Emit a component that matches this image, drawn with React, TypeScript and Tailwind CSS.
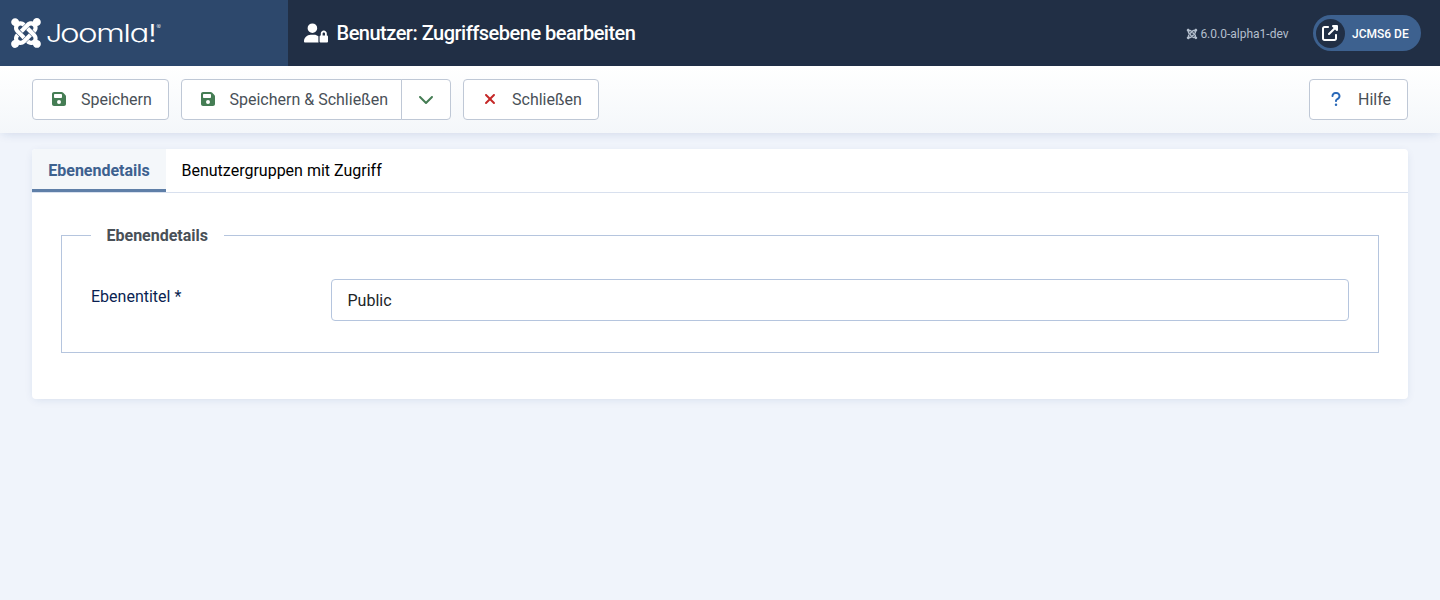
import React from "react";
import {
  FaJoomla,
  FaUserLock,
  FaUpRightFromSquare,
  FaFloppyDisk,
  FaChevronDown,
  FaXmark,
  FaQuestion,
} from "react-icons/fa6";

const button =
  "flex h-[41px] items-center border border-[#bfc8d6] bg-white text-[16px] leading-6 text-[#495057]";

function Logo() {
  return (
    <div className="flex h-[66px] w-[288px] shrink-0 items-center bg-[#2d486c] pl-[11px] text-white">
      <FaJoomla className="h-[34px] w-[30px] shrink-0" />
      <svg
        className="ml-[5px] h-[34px] w-[118px] font-['Inter',sans-serif] font-light [font-feature-settings:'cv11','ss01']"
        viewBox="0 0 118 34"
        fill="currentColor"
      >
        <text x="0" y="26" fontSize="24" textLength="16" lengthAdjust="spacingAndGlyphs">
          J
        </text>
        <text
          x="14"
          y="26"
          fontSize="24"
          letterSpacing="-1.2"
          textLength="95.5"
          lengthAdjust="spacingAndGlyphs"
        >
          oomla!
        </text>
        <text x="110.5" y="12.5" fontSize="6.5">
          ®
        </text>
      </svg>
    </div>
  );
}

function Header() {
  return (
    <header className="flex h-[66px] bg-[#212f45] text-white">
      <Logo />
      <div className="flex flex-1 items-center pl-4 pr-[19px]">
        <FaUserLock className="h-5 w-6" />
        <h1 className="ml-[8.5px] text-[20px] font-medium leading-6 tracking-[-0.5px]">
          Benutzer: Zugriffsebene bearbeiten
        </h1>
        <div className="ml-auto flex items-center pt-px text-[12px] text-[#b4bfcd]">
          <FaJoomla className="mr-[2.5px] size-3" />
          <span>6.0.0-alpha1-dev</span>
        </div>
        <a className="ml-[24.5px] flex h-9 w-[108px] items-center rounded-full bg-[#3d618f] pl-[3px]">
          <span className="flex size-[29px] items-center justify-center rounded-full bg-[#212f45] pr-px">
            <FaUpRightFromSquare className="size-4" />
          </span>
          <span className="ml-[7px] pt-px text-[12px] font-medium">JCMS6 DE</span>
        </a>
      </div>
    </header>
  );
}

function Toolbar() {
  return (
    <div className="relative flex h-[67px] items-center bg-linear-to-b from-white to-[#f4f7fa] px-8 shadow-[0_2px_10px_-2px_rgba(20,60,130,0.16)]">
      <button className={`${button} w-[137px] rounded-[4px] pl-[18px]`}>
        <FaFloppyDisk className="mb-px size-4 text-[#457d54]" />
        <span className="ml-[14px]">Speichern</span>
      </button>
      <button className={`${button} ml-3 w-[221px] rounded-l-[4px] pl-[17.5px]`}>
        <FaFloppyDisk className="mb-px size-4 text-[#457d54]" />
        <span className="ml-[14px] whitespace-nowrap">Speichern &amp; Schließen</span>
      </button>
      <button className={`${button} -ml-px w-[50px] justify-center rounded-r-[4px]`}>
        <FaChevronDown className="mb-px size-4 text-[#457d54]" />
      </button>
      <button className={`${button} ml-3 w-[136px] rounded-[4px] pl-[18px]`}>
        <FaXmark className="mb-[2px] size-4 text-[#c52827]" />
        <span className="ml-[14px]">Schließen</span>
      </button>
      <button className={`${button} ml-auto w-[99px] rounded-[4px] pl-[18px]`}>
        <FaQuestion className="mb-[2px] size-4 text-[#2a69b8]" />
        <span className="ml-[14px]">Hilfe</span>
      </button>
    </div>
  );
}

export default function App() {
  return (
    <div className="min-h-[600px] bg-[#f0f4fb] font-['Roboto',sans-serif] text-[16px] leading-6">
      <Header />
      <Toolbar />
      <main className="mx-8 mt-4 h-[250px] rounded-[4px] bg-white shadow-[0_2px_10px_-2px_rgba(20,60,130,0.13)]">
        <nav className="flex h-[44px] border-b border-[#d8e0ee]">
          <button className="h-[43px] w-[134px] rounded-tl-[4px] border-b-[3px] border-[#5f7fa8] bg-[#f4f7fa] pt-[3px] font-bold text-[#3d618f]">
            Ebenendetails
          </button>
          <button className="h-[43px] px-[15.5px] text-black">Benutzergruppen mit Zugriff</button>
        </nav>
        <div className="px-[29px] pt-[30px]">
          <fieldset className="h-[130px] border border-[#b5c5de] px-[29px]">
            <legend className="h-6 px-[15.5px] font-bold leading-[26px] text-[#495057]">
              Ebenendetails
            </legend>
            <div className="mt-8 flex">
              <label className="w-[240px] pt-[6px] text-[#0a1f52]">Ebenentitel *</label>
              <input
                className="h-[42px] flex-1 rounded-[4px] border border-[#b5c5de] bg-white px-[15.5px] text-[#212529] outline-none"
                defaultValue="Public"
              />
            </div>
          </fieldset>
        </div>
      </main>
    </div>
  );
}
